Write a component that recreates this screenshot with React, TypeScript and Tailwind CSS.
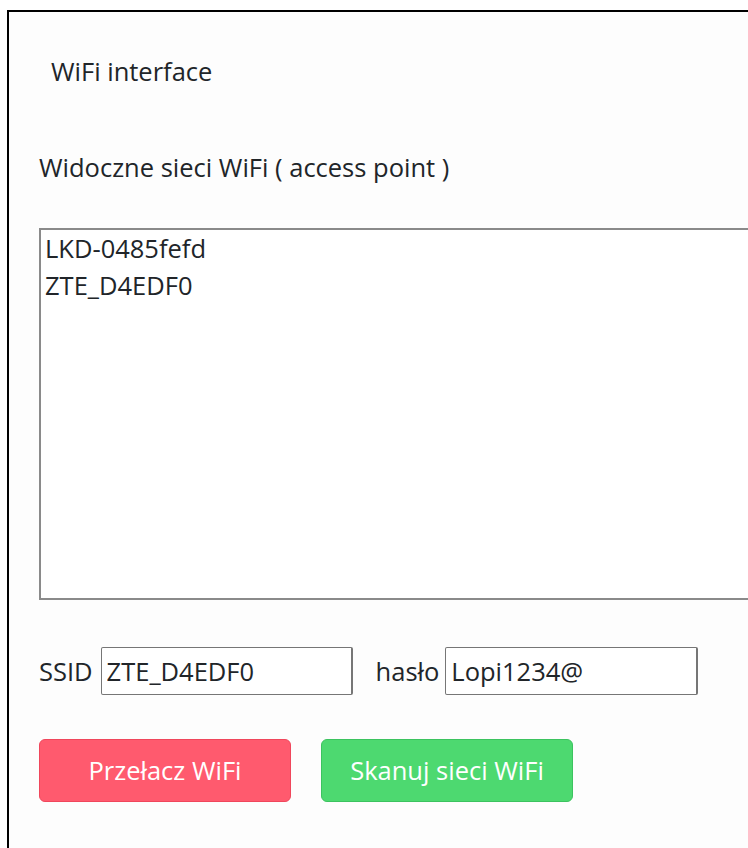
import React from 'react'

const networks = ['LKD-0485fefd', 'ZTE_D4EDF0']

export default function App() {
    return (
        <div className="w-[748px] h-[848px] overflow-hidden bg-white text-[#212529]" style={{ fontFamily: '"Open Sans", "Noto Sans", sans-serif' }}>
            <div className="ml-[7px] mt-[10px] w-[800px] h-[900px] border-l-2 border-t-2 border-black bg-[#fdfdfd] pl-[30px] pt-[42px]">
                <h1 className="ml-[12px] text-[25.5px] leading-[34px] font-normal">WiFi interface</h1>

                <p className="mt-[62px] text-[25.5px] leading-[34px]">Widoczne sieci WiFi ( access point )</p>

                {/* list of scanned access points */}
                <div className="mt-[44px] w-[760px] h-[372px] border-2 border-[#8a8a8a] bg-white px-[4px] text-[25.5px] leading-[37px]">
                    {networks.map((n) => (
                        <div key={n}>{n}</div>
                    ))}
                </div>

                <div className="mt-[47px] flex items-center text-[25.5px]">
                    <span className="mr-[8px]">SSID</span>
                    <input
                        type="text"
                        defaultValue="ZTE_D4EDF0"
                        className="w-[252px] h-[48px] border border-[#767676] border-r-2 rounded-[2px] bg-white px-[5px] text-[25.5px] outline-none"
                    />
                    <span className="ml-[23px] mr-[6px]">hasło</span>
                    <input
                        type="text"
                        defaultValue="Lopi1234@"
                        className="w-[253px] h-[48px] border border-[#767676] border-r-2 rounded-[2px] bg-white px-[5px] text-[25.5px] outline-none"
                    />
                </div>

                <div className="mt-[44px] flex gap-[30px]">
                    <button className="w-[252px] h-[63px] rounded-[6px] border border-[#f0475c] bg-[#ff5a6e] text-white text-[25.5px]">
                        Przełacz WiFi
                    </button>
                    <button className="w-[252px] h-[63px] rounded-[6px] border border-[#3cc35f] bg-[#4dd970] text-white text-[25.5px]">
                        Skanuj sieci WiFi
                    </button>
                </div>
            </div>
        </div>
    )
}
